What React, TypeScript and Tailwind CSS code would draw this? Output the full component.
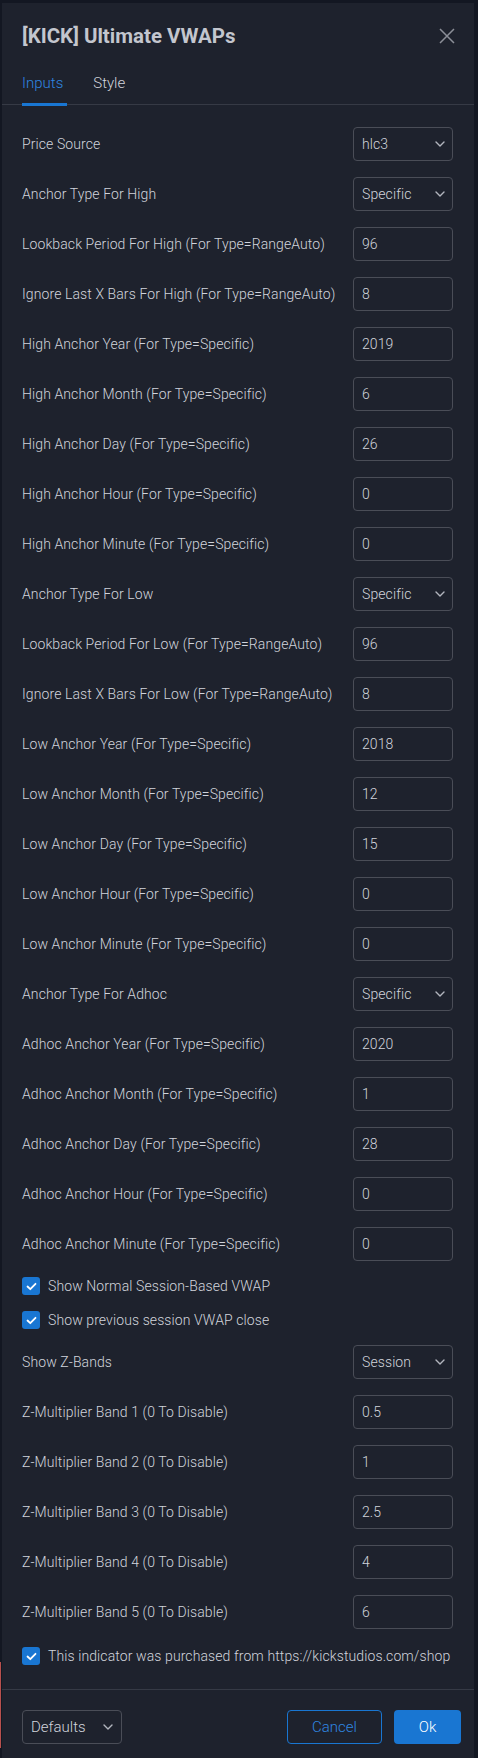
import React from "react";

type Row =
  | { kind: "input"; label: string; value: string }
  | { kind: "select"; label: string; value: string }
  | { kind: "check"; label: string; extra?: string };

const rows: Row[] = [
  { kind: "select", label: "Price Source", value: "hlc3" },
  { kind: "select", label: "Anchor Type For High", value: "Specific" },
  { kind: "input", label: "Lookback Period For High (For Type=RangeAuto)", value: "96" },
  { kind: "input", label: "Ignore Last X Bars For High (For Type=RangeAuto)", value: "8" },
  { kind: "input", label: "High Anchor Year (For Type=Specific)", value: "2019" },
  { kind: "input", label: "High Anchor Month (For Type=Specific)", value: "6" },
  { kind: "input", label: "High Anchor Day (For Type=Specific)", value: "26" },
  { kind: "input", label: "High Anchor Hour (For Type=Specific)", value: "0" },
  { kind: "input", label: "High Anchor Minute (For Type=Specific)", value: "0" },
  { kind: "select", label: "Anchor Type For Low", value: "Specific" },
  { kind: "input", label: "Lookback Period For Low (For Type=RangeAuto)", value: "96" },
  { kind: "input", label: "Ignore Last X Bars For Low (For Type=RangeAuto)", value: "8" },
  { kind: "input", label: "Low Anchor Year (For Type=Specific)", value: "2018" },
  { kind: "input", label: "Low Anchor Month (For Type=Specific)", value: "12" },
  { kind: "input", label: "Low Anchor Day (For Type=Specific)", value: "15" },
  { kind: "input", label: "Low Anchor Hour (For Type=Specific)", value: "0" },
  { kind: "input", label: "Low Anchor Minute (For Type=Specific)", value: "0" },
  { kind: "select", label: "Anchor Type For Adhoc", value: "Specific" },
  { kind: "input", label: "Adhoc Anchor Year (For Type=Specific)", value: "2020" },
  { kind: "input", label: "Adhoc Anchor Month (For Type=Specific)", value: "1" },
  { kind: "input", label: "Adhoc Anchor Day (For Type=Specific)", value: "28" },
  { kind: "input", label: "Adhoc Anchor Hour (For Type=Specific)", value: "0" },
  { kind: "input", label: "Adhoc Anchor Minute (For Type=Specific)", value: "0" },
  { kind: "check", label: "Show Normal Session-Based VWAP" },
  { kind: "check", label: "Show previous session VWAP close" },
  { kind: "select", label: "Show Z-Bands", value: "Session" },
  { kind: "input", label: "Z-Multiplier Band 1 (0 To Disable)", value: "0.5" },
  { kind: "input", label: "Z-Multiplier Band 2 (0 To Disable)", value: "1" },
  { kind: "input", label: "Z-Multiplier Band 3 (0 To Disable)", value: "2.5" },
  { kind: "input", label: "Z-Multiplier Band 4 (0 To Disable)", value: "4" },
  { kind: "input", label: "Z-Multiplier Band 5 (0 To Disable)", value: "6" },
  { kind: "check", label: "This indicator was purchased from https://kickstudios.com/shop", extra: "mt-[2px]" },
];

function Chevron() {
  return (
    <svg width="10" height="6" viewBox="0 0 10 6" fill="none" className="shrink-0">
      <path d="M1 1l4 4 4-4" stroke="#b2b5be" strokeWidth="1.4" strokeLinecap="round" strokeLinejoin="round" />
    </svg>
  );
}

function CheckBox() {
  return (
    <div className="w-[18px] h-[18px] rounded-[3px] bg-[#1976d2] flex items-center justify-center shrink-0">
      <svg width="11" height="9" viewBox="0 0 11 9" fill="none">
        <path d="M1.5 4.5l2.8 2.7L9.5 1.8" stroke="#ffffff" strokeWidth="1.8" strokeLinecap="round" strokeLinejoin="round" />
      </svg>
    </div>
  );
}

export default function App() {
  return (
    <div className="relative w-[478px] h-[1758px] overflow-hidden bg-[#131722] pt-[3px] pl-[2px] font-['Roboto',sans-serif]">
      <div className="absolute left-0 top-[1662px] w-px h-[86px] bg-[#b8504d]" />
      <div className="w-[472px] h-[1755px] bg-[#1e222d] flex flex-col">
        {/* header */}
        <div className="flex items-center justify-between pt-[21px] pl-5 pr-[19px]">
          <div className="text-[20.5px] leading-[24px] font-bold text-[#c3c6ce]">[KICK] Ultimate VWAPs</div>
          <svg width="16" height="16" viewBox="0 0 16 16" fill="none">
            <path d="M1 1l14 14M15 1L1 15" stroke="#8c8f98" strokeWidth="1.5" />
          </svg>
        </div>
        {/* tabs */}
        <div className="mt-[25px] flex gap-[30px] pl-5 border-b border-[#363a45]">
          <div className="relative pb-[11px] text-[15px] leading-[20px] font-light text-[#2f86e0]">
            Inputs
            <div className="absolute left-0 -right-[4px] -bottom-[2px] h-[3px] bg-[#1976d2]" />
          </div>
          <div className="pb-[11px] text-[15px] leading-[20px] font-light text-[#d1d4dc]">Style</div>
        </div>
        {/* content */}
        <div className="flex flex-col gap-4 pt-[22px] pb-[24px] pl-5 pr-[21px] font-light tracking-[0.1px]">
          {rows.map((r, i) =>
            r.kind === "check" ? (
              <div key={i} className={`flex items-center gap-2 h-[18px] ${r.extra ?? ""}`}>
                <CheckBox />
                <span className="text-[14px] text-[#d1d4dc] whitespace-nowrap">{r.label}</span>
              </div>
            ) : (
              <div key={i} className="flex items-center justify-between h-[34px]">
                <span className="text-[14px] text-[#d1d4dc] whitespace-nowrap">{r.label}</span>
                <div className="w-[100px] h-[34px] rounded-[4px] border border-[#4a4d57] flex items-center justify-between pl-[8px] pr-[7px] text-[14px] text-[#d1d4dc]">
                  <span>{r.value}</span>
                  {r.kind === "select" && <Chevron />}
                </div>
              </div>
            )
          )}
        </div>
        {/* footer */}
        <div className="border-t border-[#363a45] pt-5 pl-5 pr-[13px] flex items-center justify-between font-light">
          <div className="w-[100px] h-[34px] rounded-[4px] border border-[#4a4d57] flex items-center justify-between pl-[8px] pr-[8px] text-[15px] text-[#d1d4dc]">
            <span>Defaults</span>
            <Chevron />
          </div>
          <div className="flex gap-3">
            <div className="w-[95px] h-[34px] rounded-[4px] border border-[#1976d2] flex items-center justify-center text-[15px] text-[#2f86e0]">
              Cancel
            </div>
            <div className="w-[67px] h-[34px] rounded-[4px] bg-[#1976d2] flex items-center justify-center text-[15px] text-white">
              Ok
            </div>
          </div>
        </div>
      </div>
    </div>
  );
}
